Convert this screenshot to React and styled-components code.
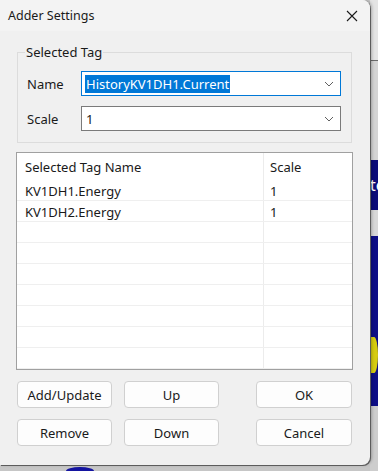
import styled, { createGlobalStyle } from "styled-components";

const GlobalStyle = createGlobalStyle`
  html, body {
    margin: 0;
    padding: 0;
    background: #c9c9c9;
  }
  * {
    box-sizing: border-box;
  }
`

const Desktop = styled.div`
  width: 378px;
  height: 471px;
  overflow: hidden;
  display: grid;
  grid-template-columns: 370px 8px;
  grid-template-rows: 465px 6px;
  background: #c9c9c9;
  font-family: "Noto Sans", "Open Sans", sans-serif;
  color: #1a1a1a;
`

const Dialog = styled.div`
  grid-area: 1 / 1;
  position: relative;
  z-index: 1;
  display: flex;
  flex-direction: column;
  background: #f0f0f0;
  border-radius: 0 8px 8px 0;
  box-shadow: 1px 1px 0 #5c5c5c, 2px 0 3px rgba(0, 0, 0, 0.25);
`

const TitleBar = styled.div`
  height: 31px;
  display: flex;
  align-items: center;
  justify-content: space-between;
  padding: 0 8px 0 8px;
  background: #f3f3f3;
  border-radius: 0 8px 0 0;
`

const Title = styled.span`
  font-size: 12.5px;
`

const CloseButton = styled.span`
  width: 20px;
  height: 20px;
  display: flex;
  align-items: center;
  justify-content: center;
`

const Body = styled.div`
  display: flex;
  flex-direction: column;
  padding: 12px 18px 0 17px;
`

const GroupBox = styled.fieldset`
  margin: 0;
  padding: 10px 10px 11px 9px;
  border: 1px solid #dcdcdc;
  display: flex;
  flex-direction: column;
  gap: 10px;
  min-width: 0;
`

const Legend = styled.legend`
  font-size: 13px;
  padding: 0 1px;
  margin-left: -2px;
  line-height: 18px;
`

const FieldRow = styled.div`
  display: flex;
  align-items: center;
`

const FieldLabel = styled.label`
  width: 54px;
  font-size: 13px;
`

const Combo = styled.div`
  width: 260px;
  height: 25px;
  display: flex;
  align-items: center;
  justify-content: space-between;
  padding: 0 6px 0 3px;
  background: #fff;
  border: 1px solid ${(p) => (p.$focused ? "#0078d7" : "#7a7a7a")};
  font-size: 13px;
`

const ComboText = styled.span`
  padding: 0 1px;
  line-height: 18px;
  background: ${(p) => (p.$selected ? "#0078d7" : "transparent")};
  color: ${(p) => (p.$selected ? "#fff" : "#1a1a1a")};
`

const ListView = styled.div`
  margin: 9px -1px 0 -1px;
  height: 218px;
  background: #fff;
  border: 1px solid #a0a0a0;
  display: flex;
  flex-direction: column;
  font-size: 13px;
`

const ListRow = styled.div`
  display: grid;
  grid-template-columns: 246px 1fr;
  height: ${(p) => (p.$header ? "27px" : "21px")};
  border-bottom: ${(p) => (p.$header ? "none" : "1px solid #efefef")};
`

const Cell = styled.div`
  display: flex;
  align-items: center;
  padding-left: ${(p) => (p.$first ? "8px" : "6px")};
  border-left: ${(p) => (p.$first ? "none" : "1px solid #ececec")};
  padding-top: ${(p) => (p.$header ? "1px" : "2px")};
`

const ButtonGrid = styled.div`
  margin-top: 11px;
  display: grid;
  grid-template-columns: 95px 95px 1fr 96px;
  grid-auto-rows: 27px;
  gap: 11px 12px;
`

const Button = styled.div`
  grid-column: ${(p) => p.$col};
  display: flex;
  align-items: center;
  justify-content: center;
  background: #fdfdfd;
  border: 1px solid #d0d0d0;
  border-radius: 4px;
  font-size: 13px;
`

const RightStrip = styled.div`
  grid-area: 1 / 2 / 3 / 3;
  display: flex;
  flex-direction: column;
  background: #cfcfcf;
`

const StripBlock = styled.div`
  height: ${(p) => p.$h}px;
  background: ${(p) => p.$bg};
  border-top: ${(p) => (p.$line ? `1px solid ${p.$line}` : "none")};
  color: #fff;
  font-size: 16px;
  display: flex;
  align-items: center;
  overflow: hidden;
  white-space: nowrap;
`

const Blob = styled.div`
  width: 8px;
  height: 36px;
  margin-top: 68px;
  background: #d6cc10;
  border-radius: 0 50% 50% 0;
`

const BottomStrip = styled.div`
  grid-area: 2 / 1;
  background: #c6c6c6;
  display: flex;
  padding-left: 66px;
`

const Oval = styled.div`
  width: 28px;
  height: 8px;
  margin-top: 2px;
  border-radius: 50% 50% 0 0;
  background: #1414a0;
`

const Chevron = () => (
  <svg width="10" height="6" viewBox="0 0 10 6">
    <path d="M1 1l4 4 4-4" fill="none" stroke="#606060" strokeWidth="1" />
  </svg>
)

const rows = [
  ["KV1DH1.Energy", "1"],
  ["KV1DH2.Energy", "1"],
  ["", ""],
  ["", ""],
  ["", ""],
  ["", ""],
  ["", ""],
  ["", ""],
  ["", ""],
]

export default function App() {
  return (
    <>
      <GlobalStyle />
      <Desktop>
        <Dialog>
          <TitleBar>
            <Title>Adder Settings</Title>
            <CloseButton>
              <svg width="12" height="12" viewBox="0 0 12 12">
                <path d="M1 1l10 10M11 1L1 11" stroke="#1a1a1a" strokeWidth="1.1" />
              </svg>
            </CloseButton>
          </TitleBar>
          <Body>
            <GroupBox>
              <Legend>Selected Tag</Legend>
              <FieldRow>
                <FieldLabel>Name</FieldLabel>
                <Combo $focused>
                  <ComboText $selected>HistoryKV1DH1.Current</ComboText>
                  <Chevron />
                </Combo>
              </FieldRow>
              <FieldRow>
                <FieldLabel>Scale</FieldLabel>
                <Combo>
                  <ComboText>1</ComboText>
                  <Chevron />
                </Combo>
              </FieldRow>
            </GroupBox>
            <ListView>
              <ListRow $header>
                <Cell $first $header>Selected Tag Name</Cell>
                <Cell $header>Scale</Cell>
              </ListRow>
              {rows.map((r, i) => (
                <ListRow key={i}>
                  <Cell $first>{r[0]}</Cell>
                  <Cell>{r[1]}</Cell>
                </ListRow>
              ))}
            </ListView>
            <ButtonGrid>
              <Button $col={1}>Add/Update</Button>
              <Button $col={2}>Up</Button>
              <Button $col={4}>OK</Button>
              <Button $col={1}>Remove</Button>
              <Button $col={2}>Down</Button>
              <Button $col={4}>Cancel</Button>
            </ButtonGrid>
          </Body>
        </Dialog>
        <RightStrip>
          <StripBlock $h={60} $bg="#e4e4e4" />
          <StripBlock $h={100} $bg="#d4d4d4" $line="#6a6a6a" />
          <StripBlock $h={50} $bg="#0c0c78">te</StripBlock>
          <StripBlock $h={26} $bg="#d8d8d8" />
          <StripBlock $h={170} $bg="#0e0e86">
            <Blob />
          </StripBlock>
          <StripBlock $h={65} $bg="#cdcdcd" />
        </RightStrip>
        <BottomStrip>
          <Oval />
        </BottomStrip>
      </Desktop>
    </>
  );
}
